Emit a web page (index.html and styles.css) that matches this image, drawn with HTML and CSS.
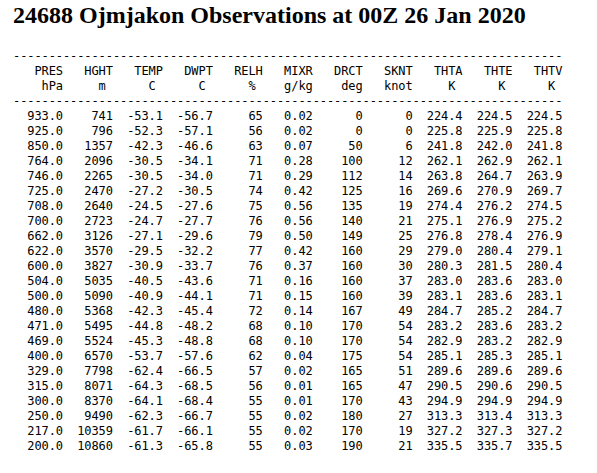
FILE: index.html
```html
<!DOCTYPE html>
<html lang="en">
  <head>
    <meta charset="UTF-8" />
    <title>24688 Ojmjakon Sounding</title>
    <link rel="stylesheet" href="styles.css">
  </head>
  <body>
    <h2 class="title">24688 Ojmjakon Observations at 00Z 26 Jan 2020</h2>
<pre class="sounding">
-----------------------------------------------------------------------------
   PRES   HGHT   TEMP   DWPT   RELH   MIXR   DRCT   SKNT   THTA   THTE   THTV
    hPa     m      C      C      %    g/kg    deg   knot     K      K      K 
-----------------------------------------------------------------------------
  933.0    741  -53.1  -56.7     65   0.02      0      0  224.4  224.5  224.5
  925.0    796  -52.3  -57.1     56   0.02      0      0  225.8  225.9  225.8
  850.0   1357  -42.3  -46.6     63   0.07     50      6  241.8  242.0  241.8
  764.0   2096  -30.5  -34.1     71   0.28    100     12  262.1  262.9  262.1
  746.0   2265  -30.5  -34.0     71   0.29    112     14  263.8  264.7  263.9
  725.0   2470  -27.2  -30.5     74   0.42    125     16  269.6  270.9  269.7
  708.0   2640  -24.5  -27.6     75   0.56    135     19  274.4  276.2  274.5
  700.0   2723  -24.7  -27.7     76   0.56    140     21  275.1  276.9  275.2
  662.0   3126  -27.1  -29.6     79   0.50    149     25  276.8  278.4  276.9
  622.0   3570  -29.5  -32.2     77   0.42    160     29  279.0  280.4  279.1
  600.0   3827  -30.9  -33.7     76   0.37    160     30  280.3  281.5  280.4
  504.0   5035  -40.5  -43.6     71   0.16    160     37  283.0  283.6  283.0
  500.0   5090  -40.9  -44.1     71   0.15    160     39  283.1  283.6  283.1
  480.0   5368  -42.3  -45.4     72   0.14    167     49  284.7  285.2  284.7
  471.0   5495  -44.8  -48.2     68   0.10    170     54  283.2  283.6  283.2
  469.0   5524  -45.3  -48.8     68   0.10    170     54  282.9  283.2  282.9
  400.0   6570  -53.7  -57.6     62   0.04    175     54  285.1  285.3  285.1
  329.0   7798  -62.4  -66.5     57   0.02    165     51  289.6  289.6  289.6
  315.0   8071  -64.3  -68.5     56   0.01    165     47  290.5  290.6  290.5
  300.0   8370  -64.1  -68.4     55   0.01    170     43  294.9  294.9  294.9
  250.0   9490  -62.3  -66.7     55   0.02    180     27  313.3  313.4  313.3
  217.0  10359  -61.7  -66.1     55   0.02    170     19  327.2  327.3  327.2
  200.0  10860  -61.3  -65.8     55   0.03    190     21  335.5  335.7  335.5
</pre>
  </body>
</html>
```

FILE: styles.css
```css
/* page */
body {
  margin: 0;
  padding: 0 13px;
  background: #fff;
  color: #000;
}

/* station heading */
.title {
  font-family: "Liberation Serif", serif;
  font-size: 24px;
  font-weight: bold;
  line-height: 28px;
  margin: 1px 0 0;
}

/* sounding table, plain text */
.sounding {
  font-family: "DejaVu Sans Mono", monospace;
  font-size: 12px;
  letter-spacing: -0.09px;
  line-height: 15px;
  margin: 20px 0 0;
}
```
